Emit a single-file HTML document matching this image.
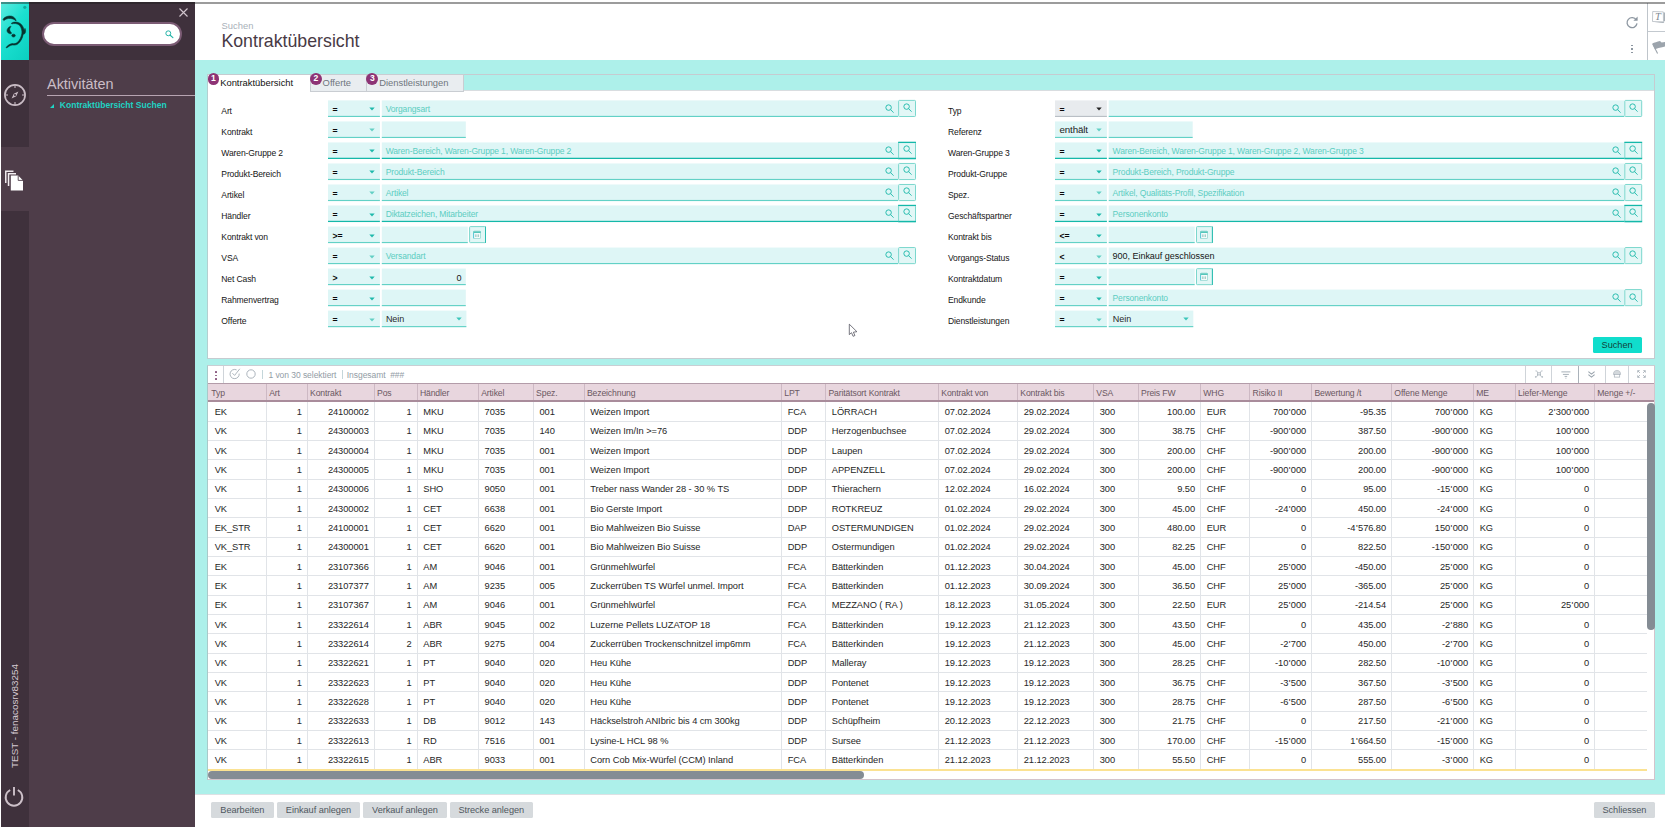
<!DOCTYPE html>
<html lang="de"><head><meta charset="utf-8"><title>Kontraktübersicht</title>
<style>
*{box-sizing:border-box;margin:0;padding:0}
html,body{width:1665px;height:827px;overflow:hidden;background:#fff}
body{position:relative;font-family:"Liberation Sans",sans-serif;font-size:9px;color:#1c1c1c;-webkit-font-smoothing:antialiased}
.a{position:absolute}
.t{position:absolute;white-space:nowrap;line-height:1}
svg{position:absolute;overflow:visible}
/* sidebar */
#strip{left:1px;top:2px;width:28px;height:825px;background:#3f313c}
#logo{left:1px;top:2px;width:28px;height:58px;background:linear-gradient(125deg,#5feadf 0%,#1be0d0 45%,#0bcfc0 100%)}
#phead{left:29px;top:2px;width:166px;height:58px;background:#3f313c}
#pbody{left:29px;top:60px;width:166px;height:767px;background:#4e3d49}
#active{left:1px;top:146.5px;width:28px;height:64px;background:#4e3d49}
#sbox{left:42.3px;top:22.1px;width:139.7px;height:24.2px;background:#fff;border:2.2px solid #7b5b74;border-radius:12.1px}
#topline{left:1px;top:2.1px;width:1664px;height:1.6px;background:rgba(30,30,30,.44)}
/* header */
#hdr{left:195px;top:2px;width:1470px;height:58.4px;background:#fff}
#main{left:195px;top:60.4px;width:1470px;height:733.2px;background:#adf0ea}
#foot{left:195px;top:793.5px;width:1470px;height:34px;background:#fff;border-top:1px solid #dde1e4}

#panel{left:206.8px;top:74px;width:1448px;height:285.4px;background:#fff;border:1px solid #c6cbd0;border-left-color:#b4cfd0}
#tabstrip{left:207.8px;top:75px;width:1446px;height:16.4px;background:#adf0ea;border-bottom:1px solid #d9dde0}
.tab{top:74px;height:17.6px;background:#e9edf0;border:1px solid #c9cdd2}
#tab1{left:206.8px;top:74px;width:103.6px;height:18.4px;background:#fff;border:1px solid #c6cbd0;border-left-color:#b4cfd0;border-bottom:none;border-right:none}
.badge{width:11.9px;height:11.9px;border-radius:50%;background:#8d3375;color:#fff;font-size:8.6px;font-weight:bold;text-align:center;line-height:11.9px;position:absolute}
.tabt{font-size:9.4px}
.lab{font-size:8.55px;color:#161616;letter-spacing:-.12px}
.f{position:absolute;height:17.1px;background:#def6f6;border-bottom:1.3px solid #5acfc4}
.f.d{border-bottom:1.6px solid #14b8a9}
.f.g{background:#e8ebee;border-bottom-color:#b9bfc5}
.op{font-size:9.5px;color:#0a0a0a;letter-spacing:-.1px}
.ph{font-size:8.5px;color:#5ccdc1;letter-spacing:-.14px}
.val{font-size:9.05px;color:#161616;letter-spacing:-.05px}
.sb{position:absolute;width:18px;height:17px;background:#fff;border:1px solid #74d5cb}
.sb.d{border-top:1.5px solid #14b8a9;border-bottom:1.5px solid #14b8a9}
#suchen{left:1592.6px;top:336.6px;width:49px;height:16.3px;background:#10ddcc;border-radius:1.5px}

#grid{left:207px;top:365.3px;width:1447.8px;height:414.7px;background:#fff;border:1px solid #d3c4cc;border-top-color:#c9ced3;border-left-color:#a9c9c9}
#ghead{left:208px;top:382.6px;width:1446.4px;height:19.2px;background:#e8d6de;border-top:1.8px solid #b39ca9;border-bottom:2px solid #a98c9b}
.hc{position:absolute;top:384.2px;height:16px;width:1px;background:#cdb9c4}
.ht{font-size:8.65px;color:#6b5862;letter-spacing:-.12px}
.rl{position:absolute;left:208px;width:1439.4px;height:1px;background:#e1e4e8}
.cl{position:absolute;top:402px;width:1px;height:367px;background:#e1e4e8}
.c{position:absolute;font-size:9.3px;line-height:1;white-space:nowrap;color:#262626;letter-spacing:-.06px}
.c i{font-style:normal;margin:0 .42px}
.tsep{position:absolute;top:366.3px;height:16.3px;width:1px;background:#cfd4d9}
.tt{font-size:8.5px;color:#929ca5;letter-spacing:-.05px}
.btn{position:absolute;top:802.2px;height:16px;background:#d6dadd;border-radius:1.5px;font-size:9.2px;color:#4f575e;text-align:center;line-height:17.7px;white-space:nowrap;letter-spacing:-.05px}
</style></head>
<body>
<div class="a" id="hdr"></div><div class="a" id="main"></div><div class="a" id="foot"></div>
<div class="a" id="strip"></div><div class="a" id="active"></div><div class="a" id="logo"></div>
<div class="a" id="phead"></div><div class="a" id="pbody"></div>
<div class="a" id="sbox"></div>
<svg style="left:1px;top:2px" width="28" height="58" viewBox="0 0 28 58">
<circle cx="23.8" cy="5.3" r="1.6" fill="#10a99d"/>
<g fill="#06332f" stroke="#06332f" stroke-width="0.55" stroke-linejoin="round">
<path d="M2.0 17.4 C3.0 15.0 7.4 13.3 10.8 14.2 C13.0 14.8 14.6 16.6 15.2 19.0 C13.4 17.3 11.6 16.7 9.4 16.5 C6.8 16.4 4.6 17.0 2.8 18.6 Z"/>
<path d="M10.4 21.2 C12.4 19.8 16.2 19.6 18.8 21.2 C21.2 22.6 22.6 25.4 23.2 28.4 C23.6 27.6 23.8 26.8 24.0 26.4 C24.9 28.2 24.8 30.4 23.6 31.8 C23.2 32.2 22.6 32.4 22.2 32.2 C21.6 36.2 19.6 39.6 17.0 41.8 C15.2 43.2 13.2 43.2 11.4 43.0 C9.4 43.2 7.6 44.6 5.6 46.0 L5.0 45.4 C6.8 43.6 8.8 41.8 11.2 41.6 C13.0 41.8 14.8 41.8 16.2 40.6 C18.6 38.4 20.4 35.0 20.9 31.2 C21.2 28.6 20.4 25.4 18.4 23.2 C16.4 21.4 13.2 21.2 10.8 21.9 Z"/>
<path d="M9.6 24.2 C7.4 25.2 6.0 26.9 6.0 28.6 C6.0 30.4 7.8 31.9 9.8 31.8 C10.5 31.7 10.6 31.0 10.2 30.4 C9.4 29.6 8.7 28.6 8.7 27.4 C8.7 26.2 9.2 25.4 10.0 24.7 Z"/>
<ellipse cx="12.5" cy="33.6" rx="1.75" ry="1.45"/>
</g>
</svg>
<svg style="left:179.4px;top:8.1px" width="9" height="9" viewBox="0 0 9 9"><path d="M0.5 0.5 L8.5 8.5 M8.5 0.5 L0.5 8.5" stroke="#d2c6ce" stroke-width="1.1" fill="none"/></svg>
<svg style="left:165px;top:29.8px" width="9" height="9" viewBox="0 0 9 9"><circle cx="3.3" cy="3.3" r="2.45" fill="none" stroke="#25b4a8" stroke-width="1"/><path d="M5.2 5.2 L7.9 7.6" stroke="#25b4a8" stroke-width="1.15" stroke-linecap="round"/></svg>
<svg style="left:2.5px;top:82.5px" width="24" height="24" viewBox="0 0 24 24"><g fill="none" stroke="#c9bcc5">
<circle cx="12" cy="12" r="10.1" stroke-width="1.7"/>
<path d="M12 2 V5 M12 19 V22 M2 12 H5 M19 12 H22" stroke-width="1.1"/>
</g><path d="M15.4 8.6 L13.2 13.2 L8.6 15.4 L10.8 10.8 Z" fill="#c9bcc5"/><circle cx="12" cy="12" r="1" fill="#3f313c"/></svg>
<svg style="left:4px;top:168px" width="22" height="24" viewBox="0 0 22 24">
<path d="M1 2.5 H9.5 V4 H2.5 V15 H1 Z" fill="#efe9ed"/>
<path d="M3.8 5 H12 V6.5 H5.3 V18 H3.8 Z" fill="#f4eff2"/>
<path d="M6.8 7.6 H14.2 L19 12.4 V22.6 H6.8 Z" fill="#fff"/>
<path d="M14.2 7.6 V12.4 H19" fill="none" stroke="#4e3d49" stroke-width="0.9"/>
</svg>
<div class="t" style="left:47px;top:77.2px;font-size:14.45px;color:#cbbdc7">Aktivitäten</div>
<div class="a" style="left:47px;top:95px;width:148px;height:1px;background:#b7a4b1"></div>
<svg style="left:49.5px;top:103.6px" width="4" height="4" viewBox="0 0 4 4"><path d="M4 0 V4 H0 Z" fill="#1fd6c6"/></svg>
<div class="t" style="left:59.8px;top:101.2px;font-size:8.55px;font-weight:bold;color:#1fd2c3">Kontraktübersicht Suchen</div>
<div class="t" style="left:15px;top:716px;font-size:9.85px;color:#d6cbd2;transform:translate(-50%,-50%) rotate(-90deg)">TEST - fenacosrv83254</div>
<svg style="left:4.4px;top:785.5px" width="20" height="20" viewBox="0 0 20 20"><g fill="none" stroke="#cdc1c9" stroke-width="1.9" stroke-linecap="butt">
<path d="M6.2 4.0 A8.3 8.3 0 1 0 13.8 4.0"/><path d="M10 1 V9.6"/></g></svg>
<div class="t" style="left:221.6px;top:20.6px;font-size:9.4px;color:#a9b1b9">Suchen</div>
<div class="t" style="left:221.4px;top:33.3px;font-size:17.75px;color:#483a45">Kontraktübersicht</div>
<div class="a" style="left:1647.3px;top:3px;width:1px;height:57.2px;background:#bfc5cb"></div>
<div class="a" style="left:1648px;top:30.7px;width:17px;height:1px;background:#c3c9cf"></div>
<svg style="left:1651px;top:9px" width="14" height="16" viewBox="0 0 14 16">
<path d="M3.6 13.3 L12.4 13.9 L13.4 13 Z" fill="#a4acb4"/>
<path d="M12.5 3.4 H14 V12.2 H12.5 Z" fill="#a9b1b8"/>
<path d="M1.7 2.5 L12.3 2.9 L12.5 12.8 L1.5 12.5 Z" fill="#fff" stroke="#aab2b9" stroke-width="0.7"/>
<text x="4.1" y="11.0" font-family="Liberation Serif" font-style="italic" font-size="10.5" fill="#7f8993">T</text></svg>
<svg style="left:1651px;top:38px" width="14" height="17" viewBox="0 0 14 17">
<path d="M1.3 5.6 C3.4 4.4 6.2 3.6 9.0 2.9 L10.6 4.6 L14 4.0 V8.6 L11.2 9.2 C8.6 9.6 6.4 10.2 4.0 11.2 Z" fill="#9ca4ac"/>
<path d="M1.7 6.0 L6.6 15.4" stroke="#9ca4ac" stroke-width="1.1" fill="none"/></svg>
<svg style="left:1625px;top:15px" width="14" height="14" viewBox="0 0 14 14"><path d="M11.3 5.0 A5 5 0 1 0 12 8.4" fill="none" stroke="#8d97a1" stroke-width="1.3"/><path d="M12.6 1.6 V5.8 H8.4 Z" fill="#8d97a1"/></svg>
<div class="a" style="left:1631.2px;top:44.6px;width:1.7px;height:1.7px;background:#8d97a1"></div><div class="a" style="left:1631.2px;top:48.2px;width:1.7px;height:1.7px;background:#8d97a1"></div><div class="a" style="left:1631.2px;top:51.8px;width:1.7px;height:1.7px;background:#8d97a1"></div>
<div class="a" id="panel"></div><div class="a" id="tabstrip"></div>
<div class="a" id="tab1"></div>
<div class="a tab" style="left:310.2px;width:56.6px"></div>
<div class="a tab" style="left:366.2px;width:97.6px"></div>
<div class="badge" style="left:207.5px;top:73.1px">1</div>
<div class="badge" style="left:309.9px;top:73.1px">2</div>
<div class="badge" style="left:366.4px;top:73.1px">3</div>
<div class="t tabt" style="left:220.2px;top:77.8px;color:#111">Kontraktübersicht</div>
<div class="t tabt" style="left:322.6px;top:77.8px;color:#6f767d">Offerte</div>
<div class="t tabt" style="left:379.2px;top:77.8px;color:#6f767d">Dienstleistungen</div>
<svg style="left:0;top:0" width="1665" height="370" viewBox="0 0 1665 370"><rect x="328.00" y="100.40" width="51.90" height="15.65" fill="#def6f6"/><rect x="328.00" y="115.85" width="51.90" height="1.15" fill="#62d1c6"/><rect x="381.80" y="100.40" width="516.30" height="15.65" fill="#def6f6"/><rect x="381.80" y="115.85" width="516.30" height="1.15" fill="#62d1c6"/><rect x="898.60" y="100.40" width="16.90" height="16.10" rx="0.8" fill="#e2f7f6" stroke="#7bd7cd" stroke-width="1"/><rect x="328.00" y="121.42" width="51.90" height="15.65" fill="#def6f6"/><rect x="328.00" y="136.87" width="51.90" height="1.15" fill="#62d1c6"/><rect x="381.80" y="121.42" width="84.00" height="15.65" fill="#def6f6"/><rect x="381.80" y="136.87" width="84.00" height="1.15" fill="#62d1c6"/><rect x="328.00" y="142.44" width="51.90" height="15.65" fill="#def6f6"/><rect x="328.00" y="157.74" width="51.90" height="1.25" fill="#14b8a9"/><rect x="381.80" y="142.44" width="516.30" height="15.65" fill="#def6f6"/><rect x="381.80" y="157.74" width="516.30" height="1.25" fill="#14b8a9"/><rect x="898.60" y="142.44" width="16.90" height="16.10" rx="0.8" fill="#e2f7f6" stroke="#7bd7cd" stroke-width="1"/><rect x="898.10" y="141.74" width="17.90" height="1.3" fill="#14b8a9"/><rect x="898.10" y="157.74" width="17.90" height="1.5" fill="#14b8a9"/><rect x="328.00" y="163.46" width="51.90" height="15.65" fill="#def6f6"/><rect x="328.00" y="178.91" width="51.90" height="1.15" fill="#62d1c6"/><rect x="381.80" y="163.46" width="516.30" height="15.65" fill="#def6f6"/><rect x="381.80" y="178.91" width="516.30" height="1.15" fill="#62d1c6"/><rect x="898.60" y="163.46" width="16.90" height="16.10" rx="0.8" fill="#e2f7f6" stroke="#7bd7cd" stroke-width="1"/><rect x="328.00" y="184.48" width="51.90" height="15.65" fill="#def6f6"/><rect x="328.00" y="199.93" width="51.90" height="1.15" fill="#62d1c6"/><rect x="381.80" y="184.48" width="516.30" height="15.65" fill="#def6f6"/><rect x="381.80" y="199.93" width="516.30" height="1.15" fill="#62d1c6"/><rect x="898.60" y="184.48" width="16.90" height="16.10" rx="0.8" fill="#e2f7f6" stroke="#7bd7cd" stroke-width="1"/><rect x="328.00" y="205.50" width="51.90" height="15.65" fill="#def6f6"/><rect x="328.00" y="220.80" width="51.90" height="1.25" fill="#14b8a9"/><rect x="381.80" y="205.50" width="516.30" height="15.65" fill="#def6f6"/><rect x="381.80" y="220.80" width="516.30" height="1.25" fill="#14b8a9"/><rect x="898.60" y="205.50" width="16.90" height="16.10" rx="0.8" fill="#e2f7f6" stroke="#7bd7cd" stroke-width="1"/><rect x="898.10" y="204.80" width="17.90" height="1.3" fill="#14b8a9"/><rect x="898.10" y="220.80" width="17.90" height="1.5" fill="#14b8a9"/><rect x="328.00" y="226.52" width="51.90" height="15.65" fill="#def6f6"/><rect x="328.00" y="241.97" width="51.90" height="1.15" fill="#62d1c6"/><rect x="381.80" y="226.52" width="86.00" height="15.65" fill="#def6f6"/><rect x="381.80" y="241.97" width="86.00" height="1.15" fill="#62d1c6"/><rect x="469.60" y="226.62" width="15.90" height="16.00" rx="0.8" fill="#e2f7f6" stroke="#7bd7cd" stroke-width="1"/><rect x="485.00" y="226.52" width="1" height="16.4" fill="#2cbdb0"/><rect x="328.00" y="247.54" width="51.90" height="15.65" fill="#def6f6"/><rect x="328.00" y="262.99" width="51.90" height="1.15" fill="#62d1c6"/><rect x="381.80" y="247.54" width="516.30" height="15.65" fill="#def6f6"/><rect x="381.80" y="262.99" width="516.30" height="1.15" fill="#62d1c6"/><rect x="898.60" y="247.54" width="16.90" height="16.10" rx="0.8" fill="#e2f7f6" stroke="#7bd7cd" stroke-width="1"/><rect x="328.00" y="268.56" width="51.90" height="15.65" fill="#def6f6"/><rect x="328.00" y="284.01" width="51.90" height="1.15" fill="#62d1c6"/><rect x="381.80" y="268.56" width="84.00" height="15.65" fill="#def6f6"/><rect x="381.80" y="284.01" width="84.00" height="1.15" fill="#62d1c6"/><rect x="328.00" y="289.58" width="51.90" height="15.65" fill="#def6f6"/><rect x="328.00" y="305.03" width="51.90" height="1.15" fill="#62d1c6"/><rect x="381.80" y="289.58" width="84.00" height="15.65" fill="#def6f6"/><rect x="381.80" y="305.03" width="84.00" height="1.15" fill="#62d1c6"/><rect x="328.00" y="310.60" width="51.90" height="15.65" fill="#def6f6"/><rect x="328.00" y="326.05" width="51.90" height="1.15" fill="#62d1c6"/><rect x="381.80" y="310.60" width="84.60" height="15.65" fill="#def6f6"/><rect x="381.80" y="326.05" width="84.60" height="1.15" fill="#62d1c6"/><rect x="1055.00" y="100.40" width="51.90" height="15.65" fill="#e8ebee"/><rect x="1055.00" y="115.85" width="51.90" height="1.15" fill="#b9bfc5"/><rect x="1108.70" y="100.40" width="515.60" height="15.65" fill="#def6f6"/><rect x="1108.70" y="115.85" width="515.60" height="1.15" fill="#62d1c6"/><rect x="1624.80" y="100.40" width="16.90" height="16.10" rx="0.8" fill="#e2f7f6" stroke="#7bd7cd" stroke-width="1"/><rect x="1055.00" y="121.42" width="51.90" height="15.65" fill="#def6f6"/><rect x="1055.00" y="136.87" width="51.90" height="1.15" fill="#62d1c6"/><rect x="1108.70" y="121.42" width="84.00" height="15.65" fill="#def6f6"/><rect x="1108.70" y="136.87" width="84.00" height="1.15" fill="#62d1c6"/><rect x="1055.00" y="142.44" width="51.90" height="15.65" fill="#def6f6"/><rect x="1055.00" y="157.74" width="51.90" height="1.25" fill="#14b8a9"/><rect x="1108.70" y="142.44" width="515.60" height="15.65" fill="#def6f6"/><rect x="1108.70" y="157.74" width="515.60" height="1.25" fill="#14b8a9"/><rect x="1624.80" y="142.44" width="16.90" height="16.10" rx="0.8" fill="#e2f7f6" stroke="#7bd7cd" stroke-width="1"/><rect x="1624.30" y="141.74" width="17.90" height="1.3" fill="#14b8a9"/><rect x="1624.30" y="157.74" width="17.90" height="1.5" fill="#14b8a9"/><rect x="1055.00" y="163.46" width="51.90" height="15.65" fill="#def6f6"/><rect x="1055.00" y="178.91" width="51.90" height="1.15" fill="#62d1c6"/><rect x="1108.70" y="163.46" width="515.60" height="15.65" fill="#def6f6"/><rect x="1108.70" y="178.91" width="515.60" height="1.15" fill="#62d1c6"/><rect x="1624.80" y="163.46" width="16.90" height="16.10" rx="0.8" fill="#e2f7f6" stroke="#7bd7cd" stroke-width="1"/><rect x="1055.00" y="184.48" width="51.90" height="15.65" fill="#def6f6"/><rect x="1055.00" y="199.93" width="51.90" height="1.15" fill="#62d1c6"/><rect x="1108.70" y="184.48" width="515.60" height="15.65" fill="#def6f6"/><rect x="1108.70" y="199.93" width="515.60" height="1.15" fill="#62d1c6"/><rect x="1624.80" y="184.48" width="16.90" height="16.10" rx="0.8" fill="#e2f7f6" stroke="#7bd7cd" stroke-width="1"/><rect x="1055.00" y="205.50" width="51.90" height="15.65" fill="#def6f6"/><rect x="1055.00" y="220.80" width="51.90" height="1.25" fill="#14b8a9"/><rect x="1108.70" y="205.50" width="515.60" height="15.65" fill="#def6f6"/><rect x="1108.70" y="220.80" width="515.60" height="1.25" fill="#14b8a9"/><rect x="1624.80" y="205.50" width="16.90" height="16.10" rx="0.8" fill="#e2f7f6" stroke="#7bd7cd" stroke-width="1"/><rect x="1624.30" y="204.80" width="17.90" height="1.3" fill="#14b8a9"/><rect x="1624.30" y="220.80" width="17.90" height="1.5" fill="#14b8a9"/><rect x="1055.00" y="226.52" width="51.90" height="15.65" fill="#def6f6"/><rect x="1055.00" y="241.97" width="51.90" height="1.15" fill="#62d1c6"/><rect x="1108.70" y="226.52" width="86.00" height="15.65" fill="#def6f6"/><rect x="1108.70" y="241.97" width="86.00" height="1.15" fill="#62d1c6"/><rect x="1196.50" y="226.62" width="15.90" height="16.00" rx="0.8" fill="#e2f7f6" stroke="#7bd7cd" stroke-width="1"/><rect x="1211.90" y="226.52" width="1" height="16.4" fill="#2cbdb0"/><rect x="1055.00" y="247.54" width="51.90" height="15.65" fill="#def6f6"/><rect x="1055.00" y="262.99" width="51.90" height="1.15" fill="#62d1c6"/><rect x="1108.70" y="247.54" width="515.60" height="15.65" fill="#def6f6"/><rect x="1108.70" y="262.99" width="515.60" height="1.15" fill="#62d1c6"/><rect x="1624.80" y="247.54" width="16.90" height="16.10" rx="0.8" fill="#e2f7f6" stroke="#7bd7cd" stroke-width="1"/><rect x="1055.00" y="268.56" width="51.90" height="15.65" fill="#def6f6"/><rect x="1055.00" y="284.01" width="51.90" height="1.15" fill="#62d1c6"/><rect x="1108.70" y="268.56" width="86.00" height="15.65" fill="#def6f6"/><rect x="1108.70" y="284.01" width="86.00" height="1.15" fill="#62d1c6"/><rect x="1196.50" y="268.66" width="15.90" height="16.00" rx="0.8" fill="#e2f7f6" stroke="#7bd7cd" stroke-width="1"/><rect x="1211.90" y="268.56" width="1" height="16.4" fill="#2cbdb0"/><rect x="1055.00" y="289.58" width="51.90" height="15.65" fill="#def6f6"/><rect x="1055.00" y="305.03" width="51.90" height="1.15" fill="#62d1c6"/><rect x="1108.70" y="289.58" width="515.60" height="15.65" fill="#def6f6"/><rect x="1108.70" y="305.03" width="515.60" height="1.15" fill="#62d1c6"/><rect x="1624.80" y="289.58" width="16.90" height="16.10" rx="0.8" fill="#e2f7f6" stroke="#7bd7cd" stroke-width="1"/><rect x="1055.00" y="310.60" width="51.90" height="15.65" fill="#def6f6"/><rect x="1055.00" y="326.05" width="51.90" height="1.15" fill="#62d1c6"/><rect x="1108.70" y="310.60" width="84.60" height="15.65" fill="#def6f6"/><rect x="1108.70" y="326.05" width="84.60" height="1.15" fill="#62d1c6"/></svg>
<div class="t lab" style="left:221.3px;top:107.10px">Art</div>
<div class="t op" style="left:332.6px;top:105.50px;font-size:8.7px;font-weight:bold">=</div>
<svg style="left:369.0px;top:107.40px" width="6" height="4" viewBox="0 0 6 4"><path d="M0.3 0.4 H5.7 L3 3.4 Z" fill="#1fb9ab"/></svg>
<svg style="left:885.45px;top:104.30px" width="9.5" height="9.5" viewBox="0 0 9.5 9.5"><circle cx="3.6" cy="3.6" r="2.75" fill="none" stroke="#26bbad" stroke-width="0.98"/><path d="M5.6 5.6 L8.3 8.4" stroke="#33c0b3" stroke-width="1" stroke-linecap="round"/></svg>
<svg style="left:902.60px;top:103.35px" width="9.5" height="9.5" viewBox="0 0 9.5 9.5"><circle cx="3.6" cy="3.6" r="2.75" fill="none" stroke="#26bbad" stroke-width="0.98"/><path d="M5.6 5.6 L8.3 8.4" stroke="#33c0b3" stroke-width="1" stroke-linecap="round"/></svg>
<div class="t ph" style="left:385.7px;top:105.10px">Vorgangsart</div>
<div class="t lab" style="left:221.3px;top:128.12px">Kontrakt</div>
<div class="t op" style="left:332.6px;top:126.52px;font-size:8.7px;font-weight:bold">=</div>
<svg style="left:369.0px;top:128.42px" width="6" height="4" viewBox="0 0 6 4"><path d="M0.3 0.4 H5.7 L3 3.4 Z" fill="#62cfc4"/></svg>
<div class="t lab" style="left:221.3px;top:149.14px">Waren-Gruppe 2</div>
<div class="t op" style="left:332.6px;top:147.54px;font-size:8.7px;font-weight:bold">=</div>
<svg style="left:369.0px;top:149.44px" width="6" height="4" viewBox="0 0 6 4"><path d="M0.3 0.4 H5.7 L3 3.4 Z" fill="#1fb9ab"/></svg>
<svg style="left:885.45px;top:146.34px" width="9.5" height="9.5" viewBox="0 0 9.5 9.5"><circle cx="3.6" cy="3.6" r="2.75" fill="none" stroke="#26bbad" stroke-width="0.98"/><path d="M5.6 5.6 L8.3 8.4" stroke="#33c0b3" stroke-width="1" stroke-linecap="round"/></svg>
<svg style="left:902.60px;top:145.39px" width="9.5" height="9.5" viewBox="0 0 9.5 9.5"><circle cx="3.6" cy="3.6" r="2.75" fill="none" stroke="#26bbad" stroke-width="0.98"/><path d="M5.6 5.6 L8.3 8.4" stroke="#33c0b3" stroke-width="1" stroke-linecap="round"/></svg>
<div class="t ph" style="left:385.7px;top:147.14px">Waren-Bereich, Waren-Gruppe 1, Waren-Gruppe 2</div>
<div class="t lab" style="left:221.3px;top:170.16px">Produkt-Bereich</div>
<div class="t op" style="left:332.6px;top:168.56px;font-size:8.7px;font-weight:bold">=</div>
<svg style="left:369.0px;top:170.46px" width="6" height="4" viewBox="0 0 6 4"><path d="M0.3 0.4 H5.7 L3 3.4 Z" fill="#1fb9ab"/></svg>
<svg style="left:885.45px;top:167.36px" width="9.5" height="9.5" viewBox="0 0 9.5 9.5"><circle cx="3.6" cy="3.6" r="2.75" fill="none" stroke="#26bbad" stroke-width="0.98"/><path d="M5.6 5.6 L8.3 8.4" stroke="#33c0b3" stroke-width="1" stroke-linecap="round"/></svg>
<svg style="left:902.60px;top:166.41px" width="9.5" height="9.5" viewBox="0 0 9.5 9.5"><circle cx="3.6" cy="3.6" r="2.75" fill="none" stroke="#26bbad" stroke-width="0.98"/><path d="M5.6 5.6 L8.3 8.4" stroke="#33c0b3" stroke-width="1" stroke-linecap="round"/></svg>
<div class="t ph" style="left:385.7px;top:168.16px">Produkt-Bereich</div>
<div class="t lab" style="left:221.3px;top:191.18px">Artikel</div>
<div class="t op" style="left:332.6px;top:189.58px;font-size:8.7px;font-weight:bold">=</div>
<svg style="left:369.0px;top:191.48px" width="6" height="4" viewBox="0 0 6 4"><path d="M0.3 0.4 H5.7 L3 3.4 Z" fill="#62cfc4"/></svg>
<svg style="left:885.45px;top:188.38px" width="9.5" height="9.5" viewBox="0 0 9.5 9.5"><circle cx="3.6" cy="3.6" r="2.75" fill="none" stroke="#26bbad" stroke-width="0.98"/><path d="M5.6 5.6 L8.3 8.4" stroke="#33c0b3" stroke-width="1" stroke-linecap="round"/></svg>
<svg style="left:902.60px;top:187.43px" width="9.5" height="9.5" viewBox="0 0 9.5 9.5"><circle cx="3.6" cy="3.6" r="2.75" fill="none" stroke="#26bbad" stroke-width="0.98"/><path d="M5.6 5.6 L8.3 8.4" stroke="#33c0b3" stroke-width="1" stroke-linecap="round"/></svg>
<div class="t ph" style="left:385.7px;top:189.18px">Artikel</div>
<div class="t lab" style="left:221.3px;top:212.20px">Händler</div>
<div class="t op" style="left:332.6px;top:210.60px;font-size:8.7px;font-weight:bold">=</div>
<svg style="left:369.0px;top:212.50px" width="6" height="4" viewBox="0 0 6 4"><path d="M0.3 0.4 H5.7 L3 3.4 Z" fill="#1fb9ab"/></svg>
<svg style="left:885.45px;top:209.40px" width="9.5" height="9.5" viewBox="0 0 9.5 9.5"><circle cx="3.6" cy="3.6" r="2.75" fill="none" stroke="#26bbad" stroke-width="0.98"/><path d="M5.6 5.6 L8.3 8.4" stroke="#33c0b3" stroke-width="1" stroke-linecap="round"/></svg>
<svg style="left:902.60px;top:208.45px" width="9.5" height="9.5" viewBox="0 0 9.5 9.5"><circle cx="3.6" cy="3.6" r="2.75" fill="none" stroke="#26bbad" stroke-width="0.98"/><path d="M5.6 5.6 L8.3 8.4" stroke="#33c0b3" stroke-width="1" stroke-linecap="round"/></svg>
<div class="t ph" style="left:385.7px;top:210.20px">Diktatzeichen, Mitarbeiter</div>
<div class="t lab" style="left:221.3px;top:233.22px">Kontrakt von</div>
<div class="t op" style="left:332.6px;top:231.62px;font-size:8.7px;font-weight:bold">&gt;=</div>
<svg style="left:369.0px;top:233.52px" width="6" height="4" viewBox="0 0 6 4"><path d="M0.3 0.4 H5.7 L3 3.4 Z" fill="#1fb9ab"/></svg>
<svg style="left:473.4px;top:230.12px" width="8" height="9" viewBox="0 0 8 9"><rect x="0.5" y="1.3" width="7" height="7.2" rx="0.5" fill="#f4fbfb" stroke="#8fd6cf" stroke-width="0.7"/><rect x="0.3" y="1.3" width="7.4" height="1.7" fill="#55c7bb"/><rect x="0.2" y="3" width="0.9" height="5.3" fill="#4cc5d8"/><path d="M2 0.3 V1.6 M4 0.3 V1.6 M6 0.3 V1.6" stroke="#9fdcd6" stroke-width="0.6"/><path d="M2.9 4.4 V7 M5.2 4.4 V7" stroke="#6aa9a0" stroke-width="0.8"/></svg>
<div class="t lab" style="left:221.3px;top:254.24px">VSA</div>
<div class="t op" style="left:332.6px;top:252.64px;font-size:8.7px;font-weight:bold">=</div>
<svg style="left:369.0px;top:254.54px" width="6" height="4" viewBox="0 0 6 4"><path d="M0.3 0.4 H5.7 L3 3.4 Z" fill="#62cfc4"/></svg>
<svg style="left:885.45px;top:251.44px" width="9.5" height="9.5" viewBox="0 0 9.5 9.5"><circle cx="3.6" cy="3.6" r="2.75" fill="none" stroke="#26bbad" stroke-width="0.98"/><path d="M5.6 5.6 L8.3 8.4" stroke="#33c0b3" stroke-width="1" stroke-linecap="round"/></svg>
<svg style="left:902.60px;top:250.49px" width="9.5" height="9.5" viewBox="0 0 9.5 9.5"><circle cx="3.6" cy="3.6" r="2.75" fill="none" stroke="#26bbad" stroke-width="0.98"/><path d="M5.6 5.6 L8.3 8.4" stroke="#33c0b3" stroke-width="1" stroke-linecap="round"/></svg>
<div class="t ph" style="left:385.7px;top:252.24px">Versandart</div>
<div class="t lab" style="left:221.3px;top:275.26px">Net Cash</div>
<div class="t op" style="left:332.6px;top:273.66px;font-size:8.7px;font-weight:bold">&gt;</div>
<svg style="left:369.0px;top:275.56px" width="6" height="4" viewBox="0 0 6 4"><path d="M0.3 0.4 H5.7 L3 3.4 Z" fill="#1fb9ab"/></svg>
<div class="t val" style="left:381.8px;width:79.6px;text-align:right;top:273.86px">0</div>
<div class="t lab" style="left:221.3px;top:296.28px">Rahmenvertrag</div>
<div class="t op" style="left:332.6px;top:294.68px;font-size:8.7px;font-weight:bold">=</div>
<svg style="left:369.0px;top:296.58px" width="6" height="4" viewBox="0 0 6 4"><path d="M0.3 0.4 H5.7 L3 3.4 Z" fill="#1fb9ab"/></svg>
<div class="t lab" style="left:221.3px;top:317.30px">Offerte</div>
<div class="t op" style="left:332.6px;top:315.70px;font-size:8.7px;font-weight:bold">=</div>
<svg style="left:369.0px;top:317.60px" width="6" height="4" viewBox="0 0 6 4"><path d="M0.3 0.4 H5.7 L3 3.4 Z" fill="#62cfc4"/></svg>
<div class="t val" style="left:385.9px;top:315.20px;color:#2a2a2a">Nein</div>
<svg style="left:456.2px;top:317.30px" width="6" height="4" viewBox="0 0 6 4"><path d="M0.3 0.4 H5.7 L3 3.4 Z" fill="#3cc6ba"/></svg>
<div class="t lab" style="left:948.0px;top:107.10px">Typ</div>
<div class="t op" style="left:1059.6px;top:105.50px;font-size:8.7px;font-weight:bold">=</div>
<svg style="left:1096.0px;top:107.40px" width="6" height="4" viewBox="0 0 6 4"><path d="M0.3 0.4 H5.7 L3 3.4 Z" fill="#222"/></svg>
<svg style="left:1611.65px;top:104.30px" width="9.5" height="9.5" viewBox="0 0 9.5 9.5"><circle cx="3.6" cy="3.6" r="2.75" fill="none" stroke="#26bbad" stroke-width="0.98"/><path d="M5.6 5.6 L8.3 8.4" stroke="#33c0b3" stroke-width="1" stroke-linecap="round"/></svg>
<svg style="left:1628.80px;top:103.35px" width="9.5" height="9.5" viewBox="0 0 9.5 9.5"><circle cx="3.6" cy="3.6" r="2.75" fill="none" stroke="#26bbad" stroke-width="0.98"/><path d="M5.6 5.6 L8.3 8.4" stroke="#33c0b3" stroke-width="1" stroke-linecap="round"/></svg>
<div class="t lab" style="left:948.0px;top:128.12px">Referenz</div>
<div class="t op" style="left:1059.4px;top:124.62px;font-size:9.75px;color:#222">enthält</div>
<svg style="left:1096.0px;top:128.42px" width="6" height="4" viewBox="0 0 6 4"><path d="M0.3 0.4 H5.7 L3 3.4 Z" fill="#62cfc4"/></svg>
<div class="t lab" style="left:948.0px;top:149.14px">Waren-Gruppe 3</div>
<div class="t op" style="left:1059.6px;top:147.54px;font-size:8.7px;font-weight:bold">=</div>
<svg style="left:1096.0px;top:149.44px" width="6" height="4" viewBox="0 0 6 4"><path d="M0.3 0.4 H5.7 L3 3.4 Z" fill="#1fb9ab"/></svg>
<svg style="left:1611.65px;top:146.34px" width="9.5" height="9.5" viewBox="0 0 9.5 9.5"><circle cx="3.6" cy="3.6" r="2.75" fill="none" stroke="#26bbad" stroke-width="0.98"/><path d="M5.6 5.6 L8.3 8.4" stroke="#33c0b3" stroke-width="1" stroke-linecap="round"/></svg>
<svg style="left:1628.80px;top:145.39px" width="9.5" height="9.5" viewBox="0 0 9.5 9.5"><circle cx="3.6" cy="3.6" r="2.75" fill="none" stroke="#26bbad" stroke-width="0.98"/><path d="M5.6 5.6 L8.3 8.4" stroke="#33c0b3" stroke-width="1" stroke-linecap="round"/></svg>
<div class="t ph" style="left:1112.6px;top:147.14px">Waren-Bereich, Waren-Gruppe 1, Waren-Gruppe 2, Waren-Gruppe 3</div>
<div class="t lab" style="left:948.0px;top:170.16px">Produkt-Gruppe</div>
<div class="t op" style="left:1059.6px;top:168.56px;font-size:8.7px;font-weight:bold">=</div>
<svg style="left:1096.0px;top:170.46px" width="6" height="4" viewBox="0 0 6 4"><path d="M0.3 0.4 H5.7 L3 3.4 Z" fill="#1fb9ab"/></svg>
<svg style="left:1611.65px;top:167.36px" width="9.5" height="9.5" viewBox="0 0 9.5 9.5"><circle cx="3.6" cy="3.6" r="2.75" fill="none" stroke="#26bbad" stroke-width="0.98"/><path d="M5.6 5.6 L8.3 8.4" stroke="#33c0b3" stroke-width="1" stroke-linecap="round"/></svg>
<svg style="left:1628.80px;top:166.41px" width="9.5" height="9.5" viewBox="0 0 9.5 9.5"><circle cx="3.6" cy="3.6" r="2.75" fill="none" stroke="#26bbad" stroke-width="0.98"/><path d="M5.6 5.6 L8.3 8.4" stroke="#33c0b3" stroke-width="1" stroke-linecap="round"/></svg>
<div class="t ph" style="left:1112.6px;top:168.16px">Produkt-Bereich, Produkt-Gruppe</div>
<div class="t lab" style="left:948.0px;top:191.18px">Spez.</div>
<div class="t op" style="left:1059.6px;top:189.58px;font-size:8.7px;font-weight:bold">=</div>
<svg style="left:1096.0px;top:191.48px" width="6" height="4" viewBox="0 0 6 4"><path d="M0.3 0.4 H5.7 L3 3.4 Z" fill="#62cfc4"/></svg>
<svg style="left:1611.65px;top:188.38px" width="9.5" height="9.5" viewBox="0 0 9.5 9.5"><circle cx="3.6" cy="3.6" r="2.75" fill="none" stroke="#26bbad" stroke-width="0.98"/><path d="M5.6 5.6 L8.3 8.4" stroke="#33c0b3" stroke-width="1" stroke-linecap="round"/></svg>
<svg style="left:1628.80px;top:187.43px" width="9.5" height="9.5" viewBox="0 0 9.5 9.5"><circle cx="3.6" cy="3.6" r="2.75" fill="none" stroke="#26bbad" stroke-width="0.98"/><path d="M5.6 5.6 L8.3 8.4" stroke="#33c0b3" stroke-width="1" stroke-linecap="round"/></svg>
<div class="t ph" style="left:1112.6px;top:189.18px">Artikel, Qualitäts-Profil, Spezifikation</div>
<div class="t lab" style="left:948.0px;top:212.20px">Geschäftspartner</div>
<div class="t op" style="left:1059.6px;top:210.60px;font-size:8.7px;font-weight:bold">=</div>
<svg style="left:1096.0px;top:212.50px" width="6" height="4" viewBox="0 0 6 4"><path d="M0.3 0.4 H5.7 L3 3.4 Z" fill="#1fb9ab"/></svg>
<svg style="left:1611.65px;top:209.40px" width="9.5" height="9.5" viewBox="0 0 9.5 9.5"><circle cx="3.6" cy="3.6" r="2.75" fill="none" stroke="#26bbad" stroke-width="0.98"/><path d="M5.6 5.6 L8.3 8.4" stroke="#33c0b3" stroke-width="1" stroke-linecap="round"/></svg>
<svg style="left:1628.80px;top:208.45px" width="9.5" height="9.5" viewBox="0 0 9.5 9.5"><circle cx="3.6" cy="3.6" r="2.75" fill="none" stroke="#26bbad" stroke-width="0.98"/><path d="M5.6 5.6 L8.3 8.4" stroke="#33c0b3" stroke-width="1" stroke-linecap="round"/></svg>
<div class="t ph" style="left:1112.6px;top:210.20px">Personenkonto</div>
<div class="t lab" style="left:948.0px;top:233.22px">Kontrakt bis</div>
<div class="t op" style="left:1059.6px;top:231.62px;font-size:8.7px;font-weight:bold">&lt;=</div>
<svg style="left:1096.0px;top:233.52px" width="6" height="4" viewBox="0 0 6 4"><path d="M0.3 0.4 H5.7 L3 3.4 Z" fill="#1fb9ab"/></svg>
<svg style="left:1200.3px;top:230.12px" width="8" height="9" viewBox="0 0 8 9"><rect x="0.5" y="1.3" width="7" height="7.2" rx="0.5" fill="#f4fbfb" stroke="#8fd6cf" stroke-width="0.7"/><rect x="0.3" y="1.3" width="7.4" height="1.7" fill="#55c7bb"/><rect x="0.2" y="3" width="0.9" height="5.3" fill="#4cc5d8"/><path d="M2 0.3 V1.6 M4 0.3 V1.6 M6 0.3 V1.6" stroke="#9fdcd6" stroke-width="0.6"/><path d="M2.9 4.4 V7 M5.2 4.4 V7" stroke="#6aa9a0" stroke-width="0.8"/></svg>
<div class="t lab" style="left:948.0px;top:254.24px">Vorgangs-Status</div>
<div class="t op" style="left:1059.6px;top:252.64px;font-size:8.7px;font-weight:bold">&lt;</div>
<svg style="left:1096.0px;top:254.54px" width="6" height="4" viewBox="0 0 6 4"><path d="M0.3 0.4 H5.7 L3 3.4 Z" fill="#62cfc4"/></svg>
<svg style="left:1611.65px;top:251.44px" width="9.5" height="9.5" viewBox="0 0 9.5 9.5"><circle cx="3.6" cy="3.6" r="2.75" fill="none" stroke="#26bbad" stroke-width="0.98"/><path d="M5.6 5.6 L8.3 8.4" stroke="#33c0b3" stroke-width="1" stroke-linecap="round"/></svg>
<svg style="left:1628.80px;top:250.49px" width="9.5" height="9.5" viewBox="0 0 9.5 9.5"><circle cx="3.6" cy="3.6" r="2.75" fill="none" stroke="#26bbad" stroke-width="0.98"/><path d="M5.6 5.6 L8.3 8.4" stroke="#33c0b3" stroke-width="1" stroke-linecap="round"/></svg>
<div class="t val" style="left:1112.6px;top:251.84px">900, Einkauf geschlossen</div>
<div class="t lab" style="left:948.0px;top:275.26px">Kontraktdatum</div>
<div class="t op" style="left:1059.6px;top:273.66px;font-size:8.7px;font-weight:bold">=</div>
<svg style="left:1096.0px;top:275.56px" width="6" height="4" viewBox="0 0 6 4"><path d="M0.3 0.4 H5.7 L3 3.4 Z" fill="#1fb9ab"/></svg>
<svg style="left:1200.3px;top:272.16px" width="8" height="9" viewBox="0 0 8 9"><rect x="0.5" y="1.3" width="7" height="7.2" rx="0.5" fill="#f4fbfb" stroke="#8fd6cf" stroke-width="0.7"/><rect x="0.3" y="1.3" width="7.4" height="1.7" fill="#55c7bb"/><rect x="0.2" y="3" width="0.9" height="5.3" fill="#4cc5d8"/><path d="M2 0.3 V1.6 M4 0.3 V1.6 M6 0.3 V1.6" stroke="#9fdcd6" stroke-width="0.6"/><path d="M2.9 4.4 V7 M5.2 4.4 V7" stroke="#6aa9a0" stroke-width="0.8"/></svg>
<div class="t lab" style="left:948.0px;top:296.28px">Endkunde</div>
<div class="t op" style="left:1059.6px;top:294.68px;font-size:8.7px;font-weight:bold">=</div>
<svg style="left:1096.0px;top:296.58px" width="6" height="4" viewBox="0 0 6 4"><path d="M0.3 0.4 H5.7 L3 3.4 Z" fill="#1fb9ab"/></svg>
<svg style="left:1611.65px;top:293.48px" width="9.5" height="9.5" viewBox="0 0 9.5 9.5"><circle cx="3.6" cy="3.6" r="2.75" fill="none" stroke="#26bbad" stroke-width="0.98"/><path d="M5.6 5.6 L8.3 8.4" stroke="#33c0b3" stroke-width="1" stroke-linecap="round"/></svg>
<svg style="left:1628.80px;top:292.53px" width="9.5" height="9.5" viewBox="0 0 9.5 9.5"><circle cx="3.6" cy="3.6" r="2.75" fill="none" stroke="#26bbad" stroke-width="0.98"/><path d="M5.6 5.6 L8.3 8.4" stroke="#33c0b3" stroke-width="1" stroke-linecap="round"/></svg>
<div class="t ph" style="left:1112.6px;top:294.28px">Personenkonto</div>
<div class="t lab" style="left:948.0px;top:317.30px">Dienstleistungen</div>
<div class="t op" style="left:1059.6px;top:315.70px;font-size:8.7px;font-weight:bold">=</div>
<svg style="left:1096.0px;top:317.60px" width="6" height="4" viewBox="0 0 6 4"><path d="M0.3 0.4 H5.7 L3 3.4 Z" fill="#62cfc4"/></svg>
<div class="t val" style="left:1112.8px;top:315.20px;color:#2a2a2a">Nein</div>
<svg style="left:1183.1px;top:317.30px" width="6" height="4" viewBox="0 0 6 4"><path d="M0.3 0.4 H5.7 L3 3.4 Z" fill="#3cc6ba"/></svg>
<div class="a" id="suchen"></div><div class="t" style="left:1592.6px;width:49px;text-align:center;top:340.8px;font-size:9.2px;color:#123f3a">Suchen</div>
<svg style="left:848px;top:323px" width="11" height="15" viewBox="0 0 11 15"><path d="M1.3 1.2 V11.6 L3.5 9.7 L5.1 13.3 L6.9 12.5 L5.4 9.2 L8.9 8.7 Z" fill="#fff" stroke="#4a4a55" stroke-width="0.75" stroke-linejoin="round"/></svg>
<div class="a" id="grid"></div>
<div class="a" style="left:215.2px;top:371.2px;width:1.8px;height:1.8px;border-radius:.5px;background:#8b5a80"></div>
<div class="a" style="left:215.2px;top:374.5px;width:1.8px;height:1.8px;border-radius:.5px;background:#8b5a80"></div>
<div class="a" style="left:215.2px;top:377.8px;width:1.8px;height:1.8px;border-radius:.5px;background:#8b5a80"></div>
<div class="tsep" style="left:223.2px"></div>
<svg style="left:229px;top:368px" width="12" height="12" viewBox="0 0 12 12"><path d="M10.2 5.6 A4.6 4.6 0 1 1 7.6 1.9" fill="none" stroke="#a4adb5" stroke-width="0.9"/><path d="M3.4 5.2 L5.6 7.4 L10.8 0.8" fill="none" stroke="#a4adb5" stroke-width="0.9"/></svg>
<svg style="left:246.4px;top:369.4px" width="10" height="10" viewBox="0 0 10 10"><circle cx="5" cy="5" r="4.2" fill="none" stroke="#a4adb5" stroke-width="0.9"/></svg>
<div class="a" style="left:262.4px;top:369.6px;width:1px;height:9.6px;background:#c4d6da"></div>
<div class="t tt" style="left:268.4px;top:371.0px">1 von 30 selektiert</div>
<div class="a" style="left:341.6px;top:369.6px;width:1px;height:9.6px;background:#c4d6da"></div>
<div class="t tt" style="left:346.8px;top:371.0px">Insgesamt&nbsp; ###</div>
<div class="tsep" style="left:1525.2px;background:#cfd4d9"></div>
<div class="tsep" style="left:1551.4px;background:#cfd4d9"></div>
<div class="tsep" style="left:1578.4px;background:#aab2ba"></div>
<div class="tsep" style="left:1604.5px;background:#cfd4d9"></div>
<div class="tsep" style="left:1628.4px;background:#cfd4d9"></div>
<svg style="left:1534.6px;top:370.3px" width="8" height="8" viewBox="0 0 8 8"><g fill="none" stroke="#a7b0b8" stroke-width="0.85"><path d="M0.5 0.9 C2.2 0.9 2.6 1.6 2.6 3.8 C2.6 6 2.2 6.9 0.5 6.9"/><path d="M7.5 0.9 C5.8 0.9 5.4 1.6 5.4 3.8 C5.4 6 5.8 6.9 7.5 6.9"/><path d="M2.6 2.8 H5.4 M2.6 4.9 H5.4"/></g><circle cx="0.6" cy="6.9" r="0.7" fill="#a7b0b8"/><circle cx="7.4" cy="6.9" r="0.7" fill="#a7b0b8"/></svg>
<svg style="left:1560.6px;top:370.6px" width="10" height="8" viewBox="0 0 10 8"><g fill="none" stroke="#a7b0b8" stroke-width="1"><path d="M0.4 0.9 H9.4 M1.9 3.4 H7.9 M3.6 5.4 H6.2"/></g><rect x="4.4" y="6.7" width="1" height="0.9" fill="#a7b0b8"/></svg>
<svg style="left:1588.0px;top:370.8px" width="7" height="7" viewBox="0 0 7 7"><g fill="none" stroke="#9aa4ad" stroke-width="1.15"><path d="M0.4 0.6 L3.5 3.1 L6.6 0.6 M0.4 3.6 L3.5 6.1 L6.6 3.6"/></g></svg>
<svg style="left:1612.6px;top:369.9px" width="8" height="8" viewBox="0 0 8 8"><path d="M0.4 4.6 C0.4 1.8 1.6 0.4 4 0.4 C6.4 0.4 7.6 1.8 7.6 4.6 Z" fill="#d3d8dc" stroke="#a7b0b8" stroke-width="0.6"/><rect x="1.3" y="4.4" width="5.4" height="2.7" fill="#fff" stroke="#a7b0b8" stroke-width="0.7"/></svg>
<svg style="left:1637.0px;top:370.2px" width="9" height="8" viewBox="0 0 9 8"><g fill="#a7b0b8"><path d="M0.3 0.3 H3.1 L0.3 3.1 Z M8.7 0.3 V3.1 L5.9 0.3 Z M0.3 7.7 V4.9 L3.1 7.7 Z M8.7 7.7 H5.9 L8.7 4.9 Z"/></g><g stroke="#a7b0b8" stroke-width="0.8"><path d="M1.2 1.2 L3 3 M7.8 1.2 L6 3 M1.2 6.8 L3 5 M7.8 6.8 L6 5"/></g></svg>
<div class="a" id="ghead"></div>
<div class="t ht" style="left:211.3px;top:388.6px">Typ</div>
<div class="hc" style="left:265.8px"></div>
<div class="cl" style="left:265.8px"></div>
<div class="t ht" style="left:269.2px;top:388.6px">Art</div>
<div class="hc" style="left:306.6px"></div>
<div class="cl" style="left:306.6px"></div>
<div class="t ht" style="left:310.0px;top:388.6px">Kontrakt</div>
<div class="hc" style="left:373.6px"></div>
<div class="cl" style="left:373.6px"></div>
<div class="t ht" style="left:377.0px;top:388.6px">Pos</div>
<div class="hc" style="left:416.5px"></div>
<div class="cl" style="left:416.5px"></div>
<div class="t ht" style="left:419.9px;top:388.6px">Händler</div>
<div class="hc" style="left:477.8px"></div>
<div class="cl" style="left:477.8px"></div>
<div class="t ht" style="left:481.2px;top:388.6px">Artikel</div>
<div class="hc" style="left:532.7px"></div>
<div class="cl" style="left:532.7px"></div>
<div class="t ht" style="left:536.1px;top:388.6px">Spez.</div>
<div class="hc" style="left:583.5px"></div>
<div class="cl" style="left:583.5px"></div>
<div class="t ht" style="left:586.9px;top:388.6px">Bezeichnung</div>
<div class="hc" style="left:780.9px"></div>
<div class="cl" style="left:780.9px"></div>
<div class="t ht" style="left:784.3px;top:388.6px">LPT</div>
<div class="hc" style="left:825.0px"></div>
<div class="cl" style="left:825.0px"></div>
<div class="t ht" style="left:828.4px;top:388.6px">Paritätsort Kontrakt</div>
<div class="hc" style="left:937.9px"></div>
<div class="cl" style="left:937.9px"></div>
<div class="t ht" style="left:941.3px;top:388.6px">Kontrakt von</div>
<div class="hc" style="left:1016.9px"></div>
<div class="cl" style="left:1016.9px"></div>
<div class="t ht" style="left:1020.3px;top:388.6px">Kontrakt bis</div>
<div class="hc" style="left:1092.9px"></div>
<div class="cl" style="left:1092.9px"></div>
<div class="t ht" style="left:1096.3px;top:388.6px">VSA</div>
<div class="hc" style="left:1137.6px"></div>
<div class="cl" style="left:1137.6px"></div>
<div class="t ht" style="left:1141.0px;top:388.6px">Preis FW</div>
<div class="hc" style="left:1199.9px"></div>
<div class="cl" style="left:1199.9px"></div>
<div class="t ht" style="left:1203.3px;top:388.6px">WHG</div>
<div class="hc" style="left:1249.2px"></div>
<div class="cl" style="left:1249.2px"></div>
<div class="t ht" style="left:1252.6px;top:388.6px">Risiko II</div>
<div class="hc" style="left:1311.0px"></div>
<div class="cl" style="left:1311.0px"></div>
<div class="t ht" style="left:1314.4px;top:388.6px">Bewertung /t</div>
<div class="hc" style="left:1390.9px"></div>
<div class="cl" style="left:1390.9px"></div>
<div class="t ht" style="left:1394.3px;top:388.6px">Offene Menge</div>
<div class="hc" style="left:1472.9px"></div>
<div class="cl" style="left:1472.9px"></div>
<div class="t ht" style="left:1476.3px;top:388.6px">ME</div>
<div class="hc" style="left:1514.7px"></div>
<div class="cl" style="left:1514.7px"></div>
<div class="t ht" style="left:1518.1px;top:388.6px">Liefer-Menge</div>
<div class="hc" style="left:1593.9px"></div>
<div class="cl" style="left:1593.9px"></div>
<div class="t ht" style="left:1597.3px;top:388.6px">Menge +/-</div>
<div class="c" style="left:214.7px;top:408.15px">EK</div>
<div class="c" style="left:266.3px;width:35.5px;text-align:right;top:408.15px">1</div>
<div class="c" style="left:307.1px;width:61.7px;text-align:right;top:408.15px">24100002</div>
<div class="c" style="left:374.1px;width:37.6px;text-align:right;top:408.15px">1</div>
<div class="c" style="left:423.3px;top:408.15px">MKU</div>
<div class="c" style="left:484.6px;top:408.15px">7035</div>
<div class="c" style="left:539.5px;top:408.15px">001</div>
<div class="c" style="left:590.3px;top:408.15px">Weizen Import</div>
<div class="c" style="left:787.7px;top:408.15px">FCA</div>
<div class="c" style="left:831.8px;top:408.15px">LÖRRACH</div>
<div class="c" style="left:944.7px;top:408.15px">07.02.2024</div>
<div class="c" style="left:1023.7px;top:408.15px">29.02.2024</div>
<div class="c" style="left:1099.7px;top:408.15px">300</div>
<div class="c" style="left:1138.1px;width:57.0px;text-align:right;top:408.15px">100.00</div>
<div class="c" style="left:1206.7px;top:408.15px">EUR</div>
<div class="c" style="left:1249.7px;width:56.5px;text-align:right;top:408.15px">700<i>'</i>000</div>
<div class="c" style="left:1311.5px;width:74.6px;text-align:right;top:408.15px">-95.35</div>
<div class="c" style="left:1391.4px;width:76.7px;text-align:right;top:408.15px">700<i>'</i>000</div>
<div class="c" style="left:1479.7px;top:408.15px">KG</div>
<div class="c" style="left:1515.2px;width:73.9px;text-align:right;top:408.15px">2<i>'</i>300<i>'</i>000</div>
<div class="rl" style="top:420.63px"></div>
<div class="c" style="left:214.7px;top:427.48px">VK</div>
<div class="c" style="left:266.3px;width:35.5px;text-align:right;top:427.48px">1</div>
<div class="c" style="left:307.1px;width:61.7px;text-align:right;top:427.48px">24300003</div>
<div class="c" style="left:374.1px;width:37.6px;text-align:right;top:427.48px">1</div>
<div class="c" style="left:423.3px;top:427.48px">MKU</div>
<div class="c" style="left:484.6px;top:427.48px">7035</div>
<div class="c" style="left:539.5px;top:427.48px">140</div>
<div class="c" style="left:590.3px;top:427.48px">Weizen Im/In &gt;=76</div>
<div class="c" style="left:787.7px;top:427.48px">DDP</div>
<div class="c" style="left:831.8px;top:427.48px">Herzogenbuchsee</div>
<div class="c" style="left:944.7px;top:427.48px">07.02.2024</div>
<div class="c" style="left:1023.7px;top:427.48px">29.02.2024</div>
<div class="c" style="left:1099.7px;top:427.48px">300</div>
<div class="c" style="left:1138.1px;width:57.0px;text-align:right;top:427.48px">38.75</div>
<div class="c" style="left:1206.7px;top:427.48px">CHF</div>
<div class="c" style="left:1249.7px;width:56.5px;text-align:right;top:427.48px">-900<i>'</i>000</div>
<div class="c" style="left:1311.5px;width:74.6px;text-align:right;top:427.48px">387.50</div>
<div class="c" style="left:1391.4px;width:76.7px;text-align:right;top:427.48px">-900<i>'</i>000</div>
<div class="c" style="left:1479.7px;top:427.48px">KG</div>
<div class="c" style="left:1515.2px;width:73.9px;text-align:right;top:427.48px">100<i>'</i>000</div>
<div class="rl" style="top:439.96px"></div>
<div class="c" style="left:214.7px;top:446.81px">VK</div>
<div class="c" style="left:266.3px;width:35.5px;text-align:right;top:446.81px">1</div>
<div class="c" style="left:307.1px;width:61.7px;text-align:right;top:446.81px">24300004</div>
<div class="c" style="left:374.1px;width:37.6px;text-align:right;top:446.81px">1</div>
<div class="c" style="left:423.3px;top:446.81px">MKU</div>
<div class="c" style="left:484.6px;top:446.81px">7035</div>
<div class="c" style="left:539.5px;top:446.81px">001</div>
<div class="c" style="left:590.3px;top:446.81px">Weizen Import</div>
<div class="c" style="left:787.7px;top:446.81px">DDP</div>
<div class="c" style="left:831.8px;top:446.81px">Laupen</div>
<div class="c" style="left:944.7px;top:446.81px">07.02.2024</div>
<div class="c" style="left:1023.7px;top:446.81px">29.02.2024</div>
<div class="c" style="left:1099.7px;top:446.81px">300</div>
<div class="c" style="left:1138.1px;width:57.0px;text-align:right;top:446.81px">200.00</div>
<div class="c" style="left:1206.7px;top:446.81px">CHF</div>
<div class="c" style="left:1249.7px;width:56.5px;text-align:right;top:446.81px">-900<i>'</i>000</div>
<div class="c" style="left:1311.5px;width:74.6px;text-align:right;top:446.81px">200.00</div>
<div class="c" style="left:1391.4px;width:76.7px;text-align:right;top:446.81px">-900<i>'</i>000</div>
<div class="c" style="left:1479.7px;top:446.81px">KG</div>
<div class="c" style="left:1515.2px;width:73.9px;text-align:right;top:446.81px">100<i>'</i>000</div>
<div class="rl" style="top:459.29px"></div>
<div class="c" style="left:214.7px;top:466.14px">VK</div>
<div class="c" style="left:266.3px;width:35.5px;text-align:right;top:466.14px">1</div>
<div class="c" style="left:307.1px;width:61.7px;text-align:right;top:466.14px">24300005</div>
<div class="c" style="left:374.1px;width:37.6px;text-align:right;top:466.14px">1</div>
<div class="c" style="left:423.3px;top:466.14px">MKU</div>
<div class="c" style="left:484.6px;top:466.14px">7035</div>
<div class="c" style="left:539.5px;top:466.14px">001</div>
<div class="c" style="left:590.3px;top:466.14px">Weizen Import</div>
<div class="c" style="left:787.7px;top:466.14px">DDP</div>
<div class="c" style="left:831.8px;top:466.14px">APPENZELL</div>
<div class="c" style="left:944.7px;top:466.14px">07.02.2024</div>
<div class="c" style="left:1023.7px;top:466.14px">29.02.2024</div>
<div class="c" style="left:1099.7px;top:466.14px">300</div>
<div class="c" style="left:1138.1px;width:57.0px;text-align:right;top:466.14px">200.00</div>
<div class="c" style="left:1206.7px;top:466.14px">CHF</div>
<div class="c" style="left:1249.7px;width:56.5px;text-align:right;top:466.14px">-900<i>'</i>000</div>
<div class="c" style="left:1311.5px;width:74.6px;text-align:right;top:466.14px">200.00</div>
<div class="c" style="left:1391.4px;width:76.7px;text-align:right;top:466.14px">-900<i>'</i>000</div>
<div class="c" style="left:1479.7px;top:466.14px">KG</div>
<div class="c" style="left:1515.2px;width:73.9px;text-align:right;top:466.14px">100<i>'</i>000</div>
<div class="rl" style="top:478.62px"></div>
<div class="c" style="left:214.7px;top:485.47px">VK</div>
<div class="c" style="left:266.3px;width:35.5px;text-align:right;top:485.47px">1</div>
<div class="c" style="left:307.1px;width:61.7px;text-align:right;top:485.47px">24300006</div>
<div class="c" style="left:374.1px;width:37.6px;text-align:right;top:485.47px">1</div>
<div class="c" style="left:423.3px;top:485.47px">SHO</div>
<div class="c" style="left:484.6px;top:485.47px">9050</div>
<div class="c" style="left:539.5px;top:485.47px">001</div>
<div class="c" style="left:590.3px;top:485.47px">Treber nass Wander 28 - 30 % TS</div>
<div class="c" style="left:787.7px;top:485.47px">DDP</div>
<div class="c" style="left:831.8px;top:485.47px">Thierachern</div>
<div class="c" style="left:944.7px;top:485.47px">12.02.2024</div>
<div class="c" style="left:1023.7px;top:485.47px">16.02.2024</div>
<div class="c" style="left:1099.7px;top:485.47px">300</div>
<div class="c" style="left:1138.1px;width:57.0px;text-align:right;top:485.47px">9.50</div>
<div class="c" style="left:1206.7px;top:485.47px">CHF</div>
<div class="c" style="left:1249.7px;width:56.5px;text-align:right;top:485.47px">0</div>
<div class="c" style="left:1311.5px;width:74.6px;text-align:right;top:485.47px">95.00</div>
<div class="c" style="left:1391.4px;width:76.7px;text-align:right;top:485.47px">-15<i>'</i>000</div>
<div class="c" style="left:1479.7px;top:485.47px">KG</div>
<div class="c" style="left:1515.2px;width:73.9px;text-align:right;top:485.47px">0</div>
<div class="rl" style="top:497.95px"></div>
<div class="c" style="left:214.7px;top:504.80px">VK</div>
<div class="c" style="left:266.3px;width:35.5px;text-align:right;top:504.80px">1</div>
<div class="c" style="left:307.1px;width:61.7px;text-align:right;top:504.80px">24300002</div>
<div class="c" style="left:374.1px;width:37.6px;text-align:right;top:504.80px">1</div>
<div class="c" style="left:423.3px;top:504.80px">CET</div>
<div class="c" style="left:484.6px;top:504.80px">6638</div>
<div class="c" style="left:539.5px;top:504.80px">001</div>
<div class="c" style="left:590.3px;top:504.80px">Bio Gerste Import</div>
<div class="c" style="left:787.7px;top:504.80px">DDP</div>
<div class="c" style="left:831.8px;top:504.80px">ROTKREUZ</div>
<div class="c" style="left:944.7px;top:504.80px">01.02.2024</div>
<div class="c" style="left:1023.7px;top:504.80px">29.02.2024</div>
<div class="c" style="left:1099.7px;top:504.80px">300</div>
<div class="c" style="left:1138.1px;width:57.0px;text-align:right;top:504.80px">45.00</div>
<div class="c" style="left:1206.7px;top:504.80px">CHF</div>
<div class="c" style="left:1249.7px;width:56.5px;text-align:right;top:504.80px">-24<i>'</i>000</div>
<div class="c" style="left:1311.5px;width:74.6px;text-align:right;top:504.80px">450.00</div>
<div class="c" style="left:1391.4px;width:76.7px;text-align:right;top:504.80px">-24<i>'</i>000</div>
<div class="c" style="left:1479.7px;top:504.80px">KG</div>
<div class="c" style="left:1515.2px;width:73.9px;text-align:right;top:504.80px">0</div>
<div class="rl" style="top:517.28px"></div>
<div class="c" style="left:214.7px;top:524.13px">EK_STR</div>
<div class="c" style="left:266.3px;width:35.5px;text-align:right;top:524.13px">1</div>
<div class="c" style="left:307.1px;width:61.7px;text-align:right;top:524.13px">24100001</div>
<div class="c" style="left:374.1px;width:37.6px;text-align:right;top:524.13px">1</div>
<div class="c" style="left:423.3px;top:524.13px">CET</div>
<div class="c" style="left:484.6px;top:524.13px">6620</div>
<div class="c" style="left:539.5px;top:524.13px">001</div>
<div class="c" style="left:590.3px;top:524.13px">Bio Mahlweizen Bio Suisse</div>
<div class="c" style="left:787.7px;top:524.13px">DAP</div>
<div class="c" style="left:831.8px;top:524.13px">OSTERMUNDIGEN</div>
<div class="c" style="left:944.7px;top:524.13px">01.02.2024</div>
<div class="c" style="left:1023.7px;top:524.13px">29.02.2024</div>
<div class="c" style="left:1099.7px;top:524.13px">300</div>
<div class="c" style="left:1138.1px;width:57.0px;text-align:right;top:524.13px">480.00</div>
<div class="c" style="left:1206.7px;top:524.13px">EUR</div>
<div class="c" style="left:1249.7px;width:56.5px;text-align:right;top:524.13px">0</div>
<div class="c" style="left:1311.5px;width:74.6px;text-align:right;top:524.13px">-4<i>'</i>576.80</div>
<div class="c" style="left:1391.4px;width:76.7px;text-align:right;top:524.13px">150<i>'</i>000</div>
<div class="c" style="left:1479.7px;top:524.13px">KG</div>
<div class="c" style="left:1515.2px;width:73.9px;text-align:right;top:524.13px">0</div>
<div class="rl" style="top:536.61px"></div>
<div class="c" style="left:214.7px;top:543.46px">VK_STR</div>
<div class="c" style="left:266.3px;width:35.5px;text-align:right;top:543.46px">1</div>
<div class="c" style="left:307.1px;width:61.7px;text-align:right;top:543.46px">24300001</div>
<div class="c" style="left:374.1px;width:37.6px;text-align:right;top:543.46px">1</div>
<div class="c" style="left:423.3px;top:543.46px">CET</div>
<div class="c" style="left:484.6px;top:543.46px">6620</div>
<div class="c" style="left:539.5px;top:543.46px">001</div>
<div class="c" style="left:590.3px;top:543.46px">Bio Mahlweizen Bio Suisse</div>
<div class="c" style="left:787.7px;top:543.46px">DDP</div>
<div class="c" style="left:831.8px;top:543.46px">Ostermundigen</div>
<div class="c" style="left:944.7px;top:543.46px">01.02.2024</div>
<div class="c" style="left:1023.7px;top:543.46px">29.02.2024</div>
<div class="c" style="left:1099.7px;top:543.46px">300</div>
<div class="c" style="left:1138.1px;width:57.0px;text-align:right;top:543.46px">82.25</div>
<div class="c" style="left:1206.7px;top:543.46px">CHF</div>
<div class="c" style="left:1249.7px;width:56.5px;text-align:right;top:543.46px">0</div>
<div class="c" style="left:1311.5px;width:74.6px;text-align:right;top:543.46px">822.50</div>
<div class="c" style="left:1391.4px;width:76.7px;text-align:right;top:543.46px">-150<i>'</i>000</div>
<div class="c" style="left:1479.7px;top:543.46px">KG</div>
<div class="c" style="left:1515.2px;width:73.9px;text-align:right;top:543.46px">0</div>
<div class="rl" style="top:555.94px"></div>
<div class="c" style="left:214.7px;top:562.79px">EK</div>
<div class="c" style="left:266.3px;width:35.5px;text-align:right;top:562.79px">1</div>
<div class="c" style="left:307.1px;width:61.7px;text-align:right;top:562.79px">23107366</div>
<div class="c" style="left:374.1px;width:37.6px;text-align:right;top:562.79px">1</div>
<div class="c" style="left:423.3px;top:562.79px">AM</div>
<div class="c" style="left:484.6px;top:562.79px">9046</div>
<div class="c" style="left:539.5px;top:562.79px">001</div>
<div class="c" style="left:590.3px;top:562.79px">Grünmehlwürfel</div>
<div class="c" style="left:787.7px;top:562.79px">FCA</div>
<div class="c" style="left:831.8px;top:562.79px">Bätterkinden</div>
<div class="c" style="left:944.7px;top:562.79px">01.12.2023</div>
<div class="c" style="left:1023.7px;top:562.79px">30.04.2024</div>
<div class="c" style="left:1099.7px;top:562.79px">300</div>
<div class="c" style="left:1138.1px;width:57.0px;text-align:right;top:562.79px">45.00</div>
<div class="c" style="left:1206.7px;top:562.79px">CHF</div>
<div class="c" style="left:1249.7px;width:56.5px;text-align:right;top:562.79px">25<i>'</i>000</div>
<div class="c" style="left:1311.5px;width:74.6px;text-align:right;top:562.79px">-450.00</div>
<div class="c" style="left:1391.4px;width:76.7px;text-align:right;top:562.79px">25<i>'</i>000</div>
<div class="c" style="left:1479.7px;top:562.79px">KG</div>
<div class="c" style="left:1515.2px;width:73.9px;text-align:right;top:562.79px">0</div>
<div class="rl" style="top:575.27px"></div>
<div class="c" style="left:214.7px;top:582.12px">EK</div>
<div class="c" style="left:266.3px;width:35.5px;text-align:right;top:582.12px">1</div>
<div class="c" style="left:307.1px;width:61.7px;text-align:right;top:582.12px">23107377</div>
<div class="c" style="left:374.1px;width:37.6px;text-align:right;top:582.12px">1</div>
<div class="c" style="left:423.3px;top:582.12px">AM</div>
<div class="c" style="left:484.6px;top:582.12px">9235</div>
<div class="c" style="left:539.5px;top:582.12px">005</div>
<div class="c" style="left:590.3px;top:582.12px">Zuckerrüben TS Würfel unmel. Import</div>
<div class="c" style="left:787.7px;top:582.12px">FCA</div>
<div class="c" style="left:831.8px;top:582.12px">Bätterkinden</div>
<div class="c" style="left:944.7px;top:582.12px">01.12.2023</div>
<div class="c" style="left:1023.7px;top:582.12px">30.09.2024</div>
<div class="c" style="left:1099.7px;top:582.12px">300</div>
<div class="c" style="left:1138.1px;width:57.0px;text-align:right;top:582.12px">36.50</div>
<div class="c" style="left:1206.7px;top:582.12px">CHF</div>
<div class="c" style="left:1249.7px;width:56.5px;text-align:right;top:582.12px">25<i>'</i>000</div>
<div class="c" style="left:1311.5px;width:74.6px;text-align:right;top:582.12px">-365.00</div>
<div class="c" style="left:1391.4px;width:76.7px;text-align:right;top:582.12px">25<i>'</i>000</div>
<div class="c" style="left:1479.7px;top:582.12px">KG</div>
<div class="c" style="left:1515.2px;width:73.9px;text-align:right;top:582.12px">0</div>
<div class="rl" style="top:594.60px"></div>
<div class="c" style="left:214.7px;top:601.45px">EK</div>
<div class="c" style="left:266.3px;width:35.5px;text-align:right;top:601.45px">1</div>
<div class="c" style="left:307.1px;width:61.7px;text-align:right;top:601.45px">23107367</div>
<div class="c" style="left:374.1px;width:37.6px;text-align:right;top:601.45px">1</div>
<div class="c" style="left:423.3px;top:601.45px">AM</div>
<div class="c" style="left:484.6px;top:601.45px">9046</div>
<div class="c" style="left:539.5px;top:601.45px">001</div>
<div class="c" style="left:590.3px;top:601.45px">Grünmehlwürfel</div>
<div class="c" style="left:787.7px;top:601.45px">FCA</div>
<div class="c" style="left:831.8px;top:601.45px">MEZZANO ( RA )</div>
<div class="c" style="left:944.7px;top:601.45px">18.12.2023</div>
<div class="c" style="left:1023.7px;top:601.45px">31.05.2024</div>
<div class="c" style="left:1099.7px;top:601.45px">300</div>
<div class="c" style="left:1138.1px;width:57.0px;text-align:right;top:601.45px">22.50</div>
<div class="c" style="left:1206.7px;top:601.45px">EUR</div>
<div class="c" style="left:1249.7px;width:56.5px;text-align:right;top:601.45px">25<i>'</i>000</div>
<div class="c" style="left:1311.5px;width:74.6px;text-align:right;top:601.45px">-214.54</div>
<div class="c" style="left:1391.4px;width:76.7px;text-align:right;top:601.45px">25<i>'</i>000</div>
<div class="c" style="left:1479.7px;top:601.45px">KG</div>
<div class="c" style="left:1515.2px;width:73.9px;text-align:right;top:601.45px">25<i>'</i>000</div>
<div class="rl" style="top:613.93px"></div>
<div class="c" style="left:214.7px;top:620.78px">VK</div>
<div class="c" style="left:266.3px;width:35.5px;text-align:right;top:620.78px">1</div>
<div class="c" style="left:307.1px;width:61.7px;text-align:right;top:620.78px">23322614</div>
<div class="c" style="left:374.1px;width:37.6px;text-align:right;top:620.78px">1</div>
<div class="c" style="left:423.3px;top:620.78px">ABR</div>
<div class="c" style="left:484.6px;top:620.78px">9045</div>
<div class="c" style="left:539.5px;top:620.78px">002</div>
<div class="c" style="left:590.3px;top:620.78px">Luzerne Pellets LUZATOP 18</div>
<div class="c" style="left:787.7px;top:620.78px">FCA</div>
<div class="c" style="left:831.8px;top:620.78px">Bätterkinden</div>
<div class="c" style="left:944.7px;top:620.78px">19.12.2023</div>
<div class="c" style="left:1023.7px;top:620.78px">21.12.2023</div>
<div class="c" style="left:1099.7px;top:620.78px">300</div>
<div class="c" style="left:1138.1px;width:57.0px;text-align:right;top:620.78px">43.50</div>
<div class="c" style="left:1206.7px;top:620.78px">CHF</div>
<div class="c" style="left:1249.7px;width:56.5px;text-align:right;top:620.78px">0</div>
<div class="c" style="left:1311.5px;width:74.6px;text-align:right;top:620.78px">435.00</div>
<div class="c" style="left:1391.4px;width:76.7px;text-align:right;top:620.78px">-2<i>'</i>880</div>
<div class="c" style="left:1479.7px;top:620.78px">KG</div>
<div class="c" style="left:1515.2px;width:73.9px;text-align:right;top:620.78px">0</div>
<div class="rl" style="top:633.26px"></div>
<div class="c" style="left:214.7px;top:640.11px">VK</div>
<div class="c" style="left:266.3px;width:35.5px;text-align:right;top:640.11px">1</div>
<div class="c" style="left:307.1px;width:61.7px;text-align:right;top:640.11px">23322614</div>
<div class="c" style="left:374.1px;width:37.6px;text-align:right;top:640.11px">2</div>
<div class="c" style="left:423.3px;top:640.11px">ABR</div>
<div class="c" style="left:484.6px;top:640.11px">9275</div>
<div class="c" style="left:539.5px;top:640.11px">004</div>
<div class="c" style="left:590.3px;top:640.11px">Zuckerrüben Trockenschnitzel imp6mm</div>
<div class="c" style="left:787.7px;top:640.11px">FCA</div>
<div class="c" style="left:831.8px;top:640.11px">Bätterkinden</div>
<div class="c" style="left:944.7px;top:640.11px">19.12.2023</div>
<div class="c" style="left:1023.7px;top:640.11px">21.12.2023</div>
<div class="c" style="left:1099.7px;top:640.11px">300</div>
<div class="c" style="left:1138.1px;width:57.0px;text-align:right;top:640.11px">45.00</div>
<div class="c" style="left:1206.7px;top:640.11px">CHF</div>
<div class="c" style="left:1249.7px;width:56.5px;text-align:right;top:640.11px">-2<i>'</i>700</div>
<div class="c" style="left:1311.5px;width:74.6px;text-align:right;top:640.11px">450.00</div>
<div class="c" style="left:1391.4px;width:76.7px;text-align:right;top:640.11px">-2<i>'</i>700</div>
<div class="c" style="left:1479.7px;top:640.11px">KG</div>
<div class="c" style="left:1515.2px;width:73.9px;text-align:right;top:640.11px">0</div>
<div class="rl" style="top:652.59px"></div>
<div class="c" style="left:214.7px;top:659.44px">VK</div>
<div class="c" style="left:266.3px;width:35.5px;text-align:right;top:659.44px">1</div>
<div class="c" style="left:307.1px;width:61.7px;text-align:right;top:659.44px">23322621</div>
<div class="c" style="left:374.1px;width:37.6px;text-align:right;top:659.44px">1</div>
<div class="c" style="left:423.3px;top:659.44px">PT</div>
<div class="c" style="left:484.6px;top:659.44px">9040</div>
<div class="c" style="left:539.5px;top:659.44px">020</div>
<div class="c" style="left:590.3px;top:659.44px">Heu Kühe</div>
<div class="c" style="left:787.7px;top:659.44px">DDP</div>
<div class="c" style="left:831.8px;top:659.44px">Malleray</div>
<div class="c" style="left:944.7px;top:659.44px">19.12.2023</div>
<div class="c" style="left:1023.7px;top:659.44px">19.12.2023</div>
<div class="c" style="left:1099.7px;top:659.44px">300</div>
<div class="c" style="left:1138.1px;width:57.0px;text-align:right;top:659.44px">28.25</div>
<div class="c" style="left:1206.7px;top:659.44px">CHF</div>
<div class="c" style="left:1249.7px;width:56.5px;text-align:right;top:659.44px">-10<i>'</i>000</div>
<div class="c" style="left:1311.5px;width:74.6px;text-align:right;top:659.44px">282.50</div>
<div class="c" style="left:1391.4px;width:76.7px;text-align:right;top:659.44px">-10<i>'</i>000</div>
<div class="c" style="left:1479.7px;top:659.44px">KG</div>
<div class="c" style="left:1515.2px;width:73.9px;text-align:right;top:659.44px">0</div>
<div class="rl" style="top:671.92px"></div>
<div class="c" style="left:214.7px;top:678.77px">VK</div>
<div class="c" style="left:266.3px;width:35.5px;text-align:right;top:678.77px">1</div>
<div class="c" style="left:307.1px;width:61.7px;text-align:right;top:678.77px">23322623</div>
<div class="c" style="left:374.1px;width:37.6px;text-align:right;top:678.77px">1</div>
<div class="c" style="left:423.3px;top:678.77px">PT</div>
<div class="c" style="left:484.6px;top:678.77px">9040</div>
<div class="c" style="left:539.5px;top:678.77px">020</div>
<div class="c" style="left:590.3px;top:678.77px">Heu Kühe</div>
<div class="c" style="left:787.7px;top:678.77px">DDP</div>
<div class="c" style="left:831.8px;top:678.77px">Pontenet</div>
<div class="c" style="left:944.7px;top:678.77px">19.12.2023</div>
<div class="c" style="left:1023.7px;top:678.77px">19.12.2023</div>
<div class="c" style="left:1099.7px;top:678.77px">300</div>
<div class="c" style="left:1138.1px;width:57.0px;text-align:right;top:678.77px">36.75</div>
<div class="c" style="left:1206.7px;top:678.77px">CHF</div>
<div class="c" style="left:1249.7px;width:56.5px;text-align:right;top:678.77px">-3<i>'</i>500</div>
<div class="c" style="left:1311.5px;width:74.6px;text-align:right;top:678.77px">367.50</div>
<div class="c" style="left:1391.4px;width:76.7px;text-align:right;top:678.77px">-3<i>'</i>500</div>
<div class="c" style="left:1479.7px;top:678.77px">KG</div>
<div class="c" style="left:1515.2px;width:73.9px;text-align:right;top:678.77px">0</div>
<div class="rl" style="top:691.25px"></div>
<div class="c" style="left:214.7px;top:698.10px">VK</div>
<div class="c" style="left:266.3px;width:35.5px;text-align:right;top:698.10px">1</div>
<div class="c" style="left:307.1px;width:61.7px;text-align:right;top:698.10px">23322628</div>
<div class="c" style="left:374.1px;width:37.6px;text-align:right;top:698.10px">1</div>
<div class="c" style="left:423.3px;top:698.10px">PT</div>
<div class="c" style="left:484.6px;top:698.10px">9040</div>
<div class="c" style="left:539.5px;top:698.10px">020</div>
<div class="c" style="left:590.3px;top:698.10px">Heu Kühe</div>
<div class="c" style="left:787.7px;top:698.10px">DDP</div>
<div class="c" style="left:831.8px;top:698.10px">Pontenet</div>
<div class="c" style="left:944.7px;top:698.10px">19.12.2023</div>
<div class="c" style="left:1023.7px;top:698.10px">19.12.2023</div>
<div class="c" style="left:1099.7px;top:698.10px">300</div>
<div class="c" style="left:1138.1px;width:57.0px;text-align:right;top:698.10px">28.75</div>
<div class="c" style="left:1206.7px;top:698.10px">CHF</div>
<div class="c" style="left:1249.7px;width:56.5px;text-align:right;top:698.10px">-6<i>'</i>500</div>
<div class="c" style="left:1311.5px;width:74.6px;text-align:right;top:698.10px">287.50</div>
<div class="c" style="left:1391.4px;width:76.7px;text-align:right;top:698.10px">-6<i>'</i>500</div>
<div class="c" style="left:1479.7px;top:698.10px">KG</div>
<div class="c" style="left:1515.2px;width:73.9px;text-align:right;top:698.10px">0</div>
<div class="rl" style="top:710.58px"></div>
<div class="c" style="left:214.7px;top:717.43px">VK</div>
<div class="c" style="left:266.3px;width:35.5px;text-align:right;top:717.43px">1</div>
<div class="c" style="left:307.1px;width:61.7px;text-align:right;top:717.43px">23322633</div>
<div class="c" style="left:374.1px;width:37.6px;text-align:right;top:717.43px">1</div>
<div class="c" style="left:423.3px;top:717.43px">DB</div>
<div class="c" style="left:484.6px;top:717.43px">9012</div>
<div class="c" style="left:539.5px;top:717.43px">143</div>
<div class="c" style="left:590.3px;top:717.43px">Häckselstroh ANIbric bis 4 cm 300kg</div>
<div class="c" style="left:787.7px;top:717.43px">DDP</div>
<div class="c" style="left:831.8px;top:717.43px">Schüpfheim</div>
<div class="c" style="left:944.7px;top:717.43px">20.12.2023</div>
<div class="c" style="left:1023.7px;top:717.43px">22.12.2023</div>
<div class="c" style="left:1099.7px;top:717.43px">300</div>
<div class="c" style="left:1138.1px;width:57.0px;text-align:right;top:717.43px">21.75</div>
<div class="c" style="left:1206.7px;top:717.43px">CHF</div>
<div class="c" style="left:1249.7px;width:56.5px;text-align:right;top:717.43px">0</div>
<div class="c" style="left:1311.5px;width:74.6px;text-align:right;top:717.43px">217.50</div>
<div class="c" style="left:1391.4px;width:76.7px;text-align:right;top:717.43px">-21<i>'</i>000</div>
<div class="c" style="left:1479.7px;top:717.43px">KG</div>
<div class="c" style="left:1515.2px;width:73.9px;text-align:right;top:717.43px">0</div>
<div class="rl" style="top:729.91px"></div>
<div class="c" style="left:214.7px;top:736.76px">VK</div>
<div class="c" style="left:266.3px;width:35.5px;text-align:right;top:736.76px">1</div>
<div class="c" style="left:307.1px;width:61.7px;text-align:right;top:736.76px">23322613</div>
<div class="c" style="left:374.1px;width:37.6px;text-align:right;top:736.76px">1</div>
<div class="c" style="left:423.3px;top:736.76px">RD</div>
<div class="c" style="left:484.6px;top:736.76px">7516</div>
<div class="c" style="left:539.5px;top:736.76px">001</div>
<div class="c" style="left:590.3px;top:736.76px">Lysine-L HCL 98 %</div>
<div class="c" style="left:787.7px;top:736.76px">DDP</div>
<div class="c" style="left:831.8px;top:736.76px">Sursee</div>
<div class="c" style="left:944.7px;top:736.76px">21.12.2023</div>
<div class="c" style="left:1023.7px;top:736.76px">21.12.2023</div>
<div class="c" style="left:1099.7px;top:736.76px">300</div>
<div class="c" style="left:1138.1px;width:57.0px;text-align:right;top:736.76px">170.00</div>
<div class="c" style="left:1206.7px;top:736.76px">CHF</div>
<div class="c" style="left:1249.7px;width:56.5px;text-align:right;top:736.76px">-15<i>'</i>000</div>
<div class="c" style="left:1311.5px;width:74.6px;text-align:right;top:736.76px">1<i>'</i>664.50</div>
<div class="c" style="left:1391.4px;width:76.7px;text-align:right;top:736.76px">-15<i>'</i>000</div>
<div class="c" style="left:1479.7px;top:736.76px">KG</div>
<div class="c" style="left:1515.2px;width:73.9px;text-align:right;top:736.76px">0</div>
<div class="rl" style="top:749.24px"></div>
<div class="c" style="left:214.7px;top:756.09px">VK</div>
<div class="c" style="left:266.3px;width:35.5px;text-align:right;top:756.09px">1</div>
<div class="c" style="left:307.1px;width:61.7px;text-align:right;top:756.09px">23322615</div>
<div class="c" style="left:374.1px;width:37.6px;text-align:right;top:756.09px">1</div>
<div class="c" style="left:423.3px;top:756.09px">ABR</div>
<div class="c" style="left:484.6px;top:756.09px">9033</div>
<div class="c" style="left:539.5px;top:756.09px">001</div>
<div class="c" style="left:590.3px;top:756.09px">Corn Cob Mix-Würfel (CCM) Inland</div>
<div class="c" style="left:787.7px;top:756.09px">FCA</div>
<div class="c" style="left:831.8px;top:756.09px">Bätterkinden</div>
<div class="c" style="left:944.7px;top:756.09px">21.12.2023</div>
<div class="c" style="left:1023.7px;top:756.09px">21.12.2023</div>
<div class="c" style="left:1099.7px;top:756.09px">300</div>
<div class="c" style="left:1138.1px;width:57.0px;text-align:right;top:756.09px">55.50</div>
<div class="c" style="left:1206.7px;top:756.09px">CHF</div>
<div class="c" style="left:1249.7px;width:56.5px;text-align:right;top:756.09px">0</div>
<div class="c" style="left:1311.5px;width:74.6px;text-align:right;top:756.09px">555.00</div>
<div class="c" style="left:1391.4px;width:76.7px;text-align:right;top:756.09px">-3<i>'</i>000</div>
<div class="c" style="left:1479.7px;top:756.09px">KG</div>
<div class="c" style="left:1515.2px;width:73.9px;text-align:right;top:756.09px">0</div>
<div class="a" style="left:208px;top:768.9px;width:1439.4px;height:2.3px;background:#fbe292"></div>
<div class="a" style="left:1647px;top:402.6px;width:7.8px;height:227.2px;background:#848c94;border-radius:3.9px"></div>
<div class="a" style="left:208px;top:771px;width:656px;height:8.2px;background:#848c94;border-radius:4px"></div>
<div class="btn" style="left:211.0px;width:62.7px">Bearbeiten</div>
<div class="btn" style="left:277.3px;width:82.3px">Einkauf anlegen</div>
<div class="btn" style="left:363.2px;width:83.5px">Verkauf anlegen</div>
<div class="btn" style="left:449.7px;width:83.1px">Strecke anlegen</div>
<div class="btn" style="left:1594.2px;width:60.5px">Schliessen</div>
<div class="a" id="topline"></div>
</body></html>
